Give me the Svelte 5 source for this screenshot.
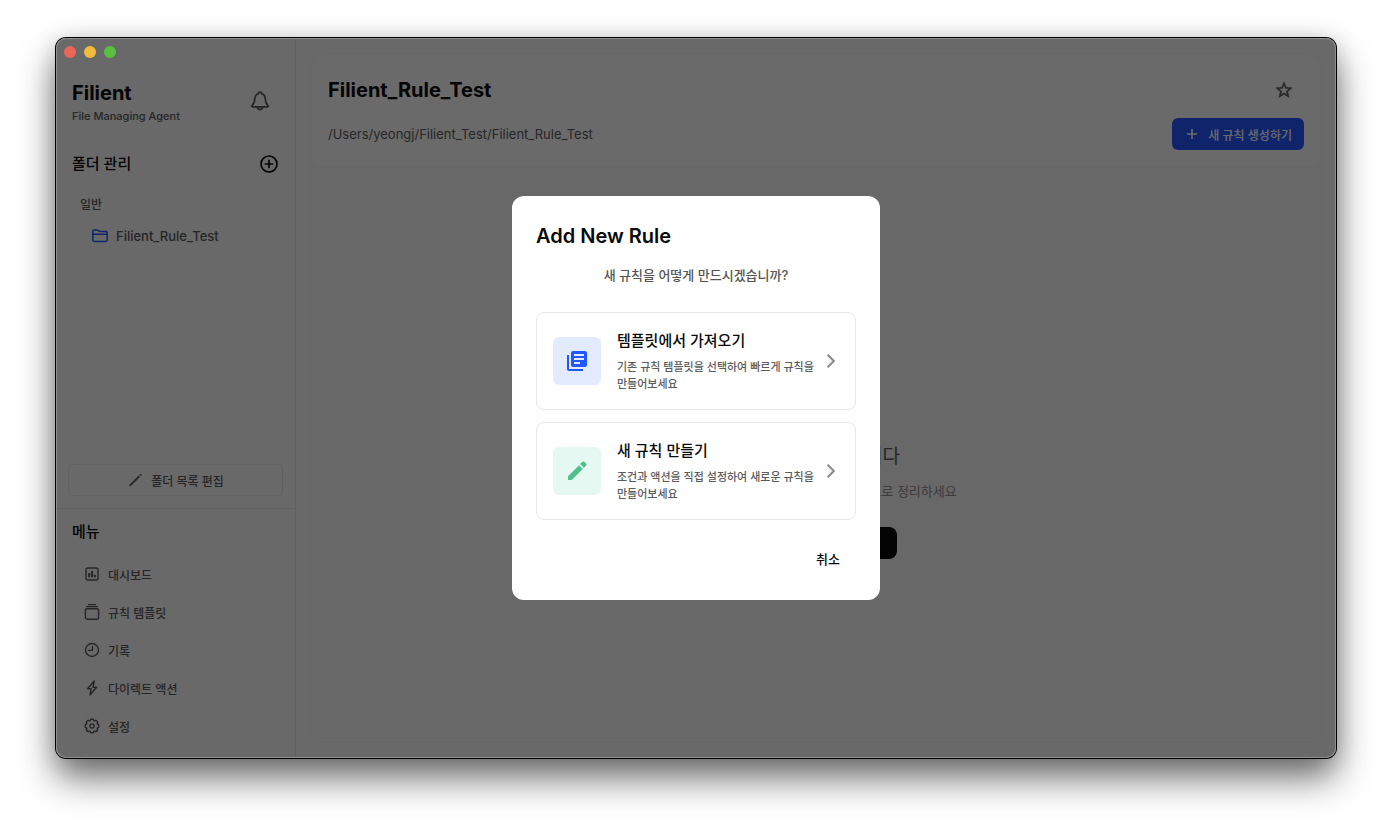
<script>
  const menu = [
    { id: 'dashboard', label: '대시보드' },
    { id: 'template', label: '규칙 템플릿' },
    { id: 'history', label: '기록' },
    { id: 'bolt', label: '다이렉트 액션' },
    { id: 'settings', label: '설정' }
  ];
  const options = [
    { id: 'library', title: '템플릿에서 가져오기', text: '기존 규칙 템플릿을 선택하여 빠르게 규칙을 만들어보세요' },
    { id: 'create', title: '새 규칙 만들기', text: '조건과 액션을 직접 설정하여 새로운 규칙을 만들어보세요' }
  ];
</script>

{#snippet menuIcon(id)}
  <svg class="icon16" viewBox="0 0 16 16" fill="none" stroke="currentColor" stroke-width="1.4" stroke-linecap="round" stroke-linejoin="round" aria-hidden="true">
    {#if id === 'dashboard'}
      <rect x="2" y="2" width="12" height="12" rx="1.8" />
      <path d="M5.2 7v4.300M8 5V11.300M10.800 8.800v2.500" stroke-width="2" stroke-linecap="butt" />
    {:else if id === 'template'}
      <rect x="1.4" y="4.8" width="13.2" height="10.4" rx="2" />
      <path d="M2.600 2.700h10.800M4.400 .7h7.200" stroke-width="1.200" />
    {:else if id === 'history'}
      <circle cx="8" cy="8" r="6.500" />
      <path d="M8.400 4.400V8.400H4.800" />
    {:else if id === 'bolt'}
      <path d="M10.200 1 3.600 8.800h3.600L6 15l6.600-7.800H9z" />
    {:else}
      <path d="M6.700 1.300h2.600l.5 1.300.8.300 1.300-.6 1.800 1.800-.6 1.300.3.800 1.300.5v2.600l-1.300.5-.3.800.6 1.300-1.800 1.800-1.300-.6-.8.300-.5 1.300H6.700l-.5-1.300-.8-.3-1.300.6-1.800-1.800.6-1.300-.3-.8-1.300-.5V6.700l1.300-.5.3-.8-.6-1.300 1.800-1.800 1.300.6.800-.3z" />
      <circle cx="8" cy="8" r="2.100" />
    {/if}
  </svg>
{/snippet}

<div class="desktop">
  <div class="window">
    <div class="lights">
      <button class="red" aria-label="닫기"></button>
      <button class="yellow" aria-label="최소화"></button>
      <button class="green" aria-label="확대"></button>
    </div>

    <aside class="sidebar">
      <header class="brand">
        <div>
          <h1>Filient</h1>
          <p>File Managing Agent</p>
        </div>
        <button class="bell" aria-label="알림">
          <svg width="20" height="20" viewBox="0 0 20 20" fill="none" stroke="currentColor" stroke-width="1.7" stroke-linejoin="round" stroke-linecap="round">
            <path d="M10 1.200c-.9 0-1.500.6-1.600 1.400C6 3.400 4.900 5.200 4.800 7.600c-.1 3.500-.8 4.900-2.600 6.700-.8.8-.4 1.600.6 1.600h14.400c1 0 1.400-.8.6-1.600-1.800-1.800-2.500-3.200-2.600-6.700-.1-2.400-1.200-4.200-3.600-5C11.500 1.800 10.900 1.200 10 1.200z" />
            <path d="M7.400 16.200c.3 1.700 1.300 2.500 2.600 2.500s2.300-.8 2.600-2.500" />
          </svg>
        </button>
      </header>

      <div class="section-head">
        <h2>폴더 관리</h2>
        <button aria-label="폴더 추가">
          <svg width="20" height="20" viewBox="0 0 20 20" fill="none" stroke="currentColor" stroke-width="1.700" stroke-linecap="round">
            <circle cx="10" cy="10" r="8" /><path d="M10 6.400v7.200M6.400 10h7.200" />
          </svg>
        </button>
      </div>

      <nav class="folders" aria-label="폴더">
        <span class="group">일반</span>
        <a class="folder" href="#folder">
          <svg class="icon16" viewBox="0 0 16 16" fill="none" stroke="#2456ff" stroke-width="1.500" stroke-linejoin="round" aria-hidden="true">
            <path d="M.8 12V3.600c0-.9.600-1.500 1.500-1.500h2.900c.5 0 .8.200 1.200.500l.5.400c.3.300.7.400 1.100.400h5.600c1 0 1.600.600 1.600 1.600V12c0 1-.6 1.600-1.600 1.600H2.400C1.400 13.600.8 13 .8 12zM.8 6.200h14.400" />
          </svg>
          <span>Filient_Rule_Test</span>
        </a>
      </nav>

      <button class="edit">
        <svg class="icon16" viewBox="0 0 16 16" aria-hidden="true"><path d="M3.200 13.400 12.400 4.100" stroke="currentColor" stroke-width="2" /><path d="M2.200 14.300 2.500 12.700 3.900 14zM12.500 2.600l.8-.7c.5-.4 1.800.8 1.400 1.300l-.8.900z" fill="currentColor" /></svg>
        <span>폴더 목록 편집</span>
      </button>

      <section class="menu">
        <h2>메뉴</h2>
        <nav aria-label="메뉴">
          {#each menu as item (item.id)}
            <a href={'#' + item.id}>{@render menuIcon(item.id)}<span>{item.label}</span></a>
          {/each}
        </nav>
      </section>
    </aside>

    <main>
      <div class="panel">
        <header class="panel-head">
          <div class="row">
            <h2>Filient_Rule_Test</h2>
            <button class="star" aria-label="즐겨찾기">
              <svg width="20" height="20" viewBox="0 0 24 24" fill="currentColor" stroke="currentColor" stroke-width=".5"><path d="m22 9.240-7.190-.62L12 2 9.190 8.630 2 9.240l5.460 4.730L5.820 21 12 17.270 18.180 21l-1.630-7.030L22 9.240zM12 15.400l-3.760 2.270 1-4.280-3.320-2.880 4.380-.38L12 6.100l1.710 4.040 4.380.38-3.320 2.880 1 4.280L12 15.400z" /></svg>
            </button>
          </div>
          <div class="row">
            <p>/Users/yeongj/Filient_Test/Filient_Rule_Test</p>
            <button class="new">
              <svg class="icon16" viewBox="0 0 16 16" aria-hidden="true"><path d="M8 3v10M3 8h10" stroke="currentColor" stroke-width="1.600" /></svg>
              <span>새 규칙 생성하기</span>
            </button>
          </div>
        </header>
        <div class="empty">
          <h3>아직 규칙이 없습니다</h3>
          <p>새로운 규칙을 만들어서 파일을 자동으로 정리하세요</p>
          <button aria-label="규칙 만들기"></button>
        </div>
      </div>
    </main>

    <div class="backdrop">
      <div class="dialog" role="dialog" aria-modal="true" aria-labelledby="dialog-title">
        <h2 id="dialog-title">Add New Rule</h2>
        <p class="question">새 규칙을 어떻게 만드시겠습니까?</p>
        <div class="options">
          {#each options as option (option.id)}
            <button class="option">
              <span class="tile {option.id}">
                <svg width="24" height="24" viewBox="0 0 24 24" fill="currentColor" aria-hidden="true">
                  {#if option.id === 'library'}
                    <path d="M4 6H2v14c0 1.100.9 2 2 2h14v-2H4V6zm16-4H8c-1.100 0-2 .9-2 2v12c0 1.100.9 2 2 2h12c1.100 0 2-.9 2-2V4c0-1.100-.9-2-2-2zm-1 9H9V9h10v2zm-4 4H9v-2h6v2zm4-8H9V5h10v2z" />
                  {:else}
                    <path d="M3 17.250V21h3.750L17.810 9.940l-3.750-3.750L3 17.250zM20.710 7.040c.8-.8 1-1.700.2-2.500l-1.450-1.450c-.8-.8-1.700-.6-2.500.2l-1.830 1.830 3.750 3.750 1.830-1.830z" />
                  {/if}
                </svg>
              </span>
              <span class="copy"><strong>{option.title}</strong><small>{option.text}</small></span>
              <svg class="icon16 arrow" viewBox="0 0 24 24" fill="currentColor" stroke="currentColor" aria-hidden="true"><path d="M6.230 20.230 8 22l10-10L8 2 6.230 3.770 14.460 12z" /></svg>
            </button>
          {/each}
        </div>
        <button class="cancel">취소</button>
      </div>
    </div>
  </div>
</div>

<style>
  :global(body) { margin: 0; background: #fff; }
  * { box-sizing: border-box; }
  h1, h2, h3, p { margin: 0; }
  button { font: inherit; color: inherit; border: 0; padding: 0; background: none; cursor: pointer; }
  a { color: inherit; text-decoration: none; }
  svg { display: block; flex: none; }
  .icon16 { width: 16px; height: 16px; }

  .desktop {
    min-height: 100vh;
    padding: 38px 56px 74px;
    display: flex;
    font-family: Inter, "Noto Sans CJK KR", sans-serif;
    font-size: 12px;
    font-weight: 500;
    color: #5c5c5c;
    overflow: hidden;
  }
  .window {
    position: relative;
    flex: 1;
    display: flex;
    border-radius: 10px;
    background: #f9f9f9;
    box-shadow: 0 0 0 1px #000, 0 20px 36px rgba(0, 0, 0, .56), 0 2px 24px rgba(0, 0, 0, .16);
  }
  .lights { position: absolute; z-index: 3; top: 8px; left: 8px; display: flex; gap: 8px; }
  .lights button { width: 12px; height: 12px; border-radius: 50%; }
  .red { background: #ec6559; }
  .yellow { background: #f3bb3c; }
  .green { background: #58c13f; }

  .sidebar {
    width: 240px;
    flex: none;
    display: flex;
    flex-direction: column;
    padding-top: 42px;
    border-right: 1px solid #e4e4e4;
  }
  .brand { display: flex; justify-content: space-between; align-items: flex-start; padding: 0 25px 0 16px; }
  .brand h1 { font-size: 20px; line-height: 26px; font-weight: 700; color: #0a0a0a; }
  .brand p { font-size: 11px; line-height: 20px; }
  .bell { padding-top: 11px; }
  .section-head { display: flex; justify-content: space-between; align-items: center; padding: 0 16px; margin-top: 26px; }
  h2 { color: #0a0a0a; }
  .section-head h2, .menu h2 { font-size: 15px; line-height: 24px; font-weight: 500; }
  .section-head button { color: #0a0a0a; }
  .folders { flex: 1; padding: 19px 24px; }
  .group { display: block; line-height: 20px; }
  .folder { display: flex; align-items: center; gap: 8px; margin-top: 11px; padding-left: 12px; font-size: 13px; line-height: 20px; }
  .edit {
    display: flex;
    align-items: center;
    justify-content: center;
    gap: 8px;
    height: 32px;
    margin: 0 12px 12px;
    border: 1px solid #e6e6e6;
    border-radius: 6px;
  }
  .menu { border-top: 1px solid #e4e4e4; padding: 11px 16px 13px; }
  .menu nav { padding-top: 11px; }
  .menu nav a { display: flex; align-items: center; gap: 8px; height: 38px; padding: 0 12px; }

  main { flex: 1; min-width: 0; padding: 16px; display: flex; }
  .panel { flex: 1; display: flex; flex-direction: column; border-radius: 12px; background: #f8f8f8; box-shadow: 0 0 0 1px #f5f5f5; }
  .panel-head { display: flex; flex-direction: column; gap: 8px; padding: 16px; border-radius: 12px; background: #fdfdfd; }
  .row { display: flex; justify-content: space-between; align-items: center; }
  .row h2 { font-size: 20px; line-height: 40px; font-weight: 700; }
  .row p { font-size: 13px; line-height: 32px; font-weight: 400; }
  .star { padding: 10px; }
  .new { display: flex; align-items: center; gap: 8px; height: 32px; padding: 0 12px; border-radius: 6px; background: #2456ff; color: #fff; }
  .empty { flex: 1; display: flex; flex-direction: column; align-items: center; justify-content: center; padding-top: 94px; }
  .empty h3 { font-size: 19px; line-height: 28px; font-weight: 400; color: #5c5c5c; }
  .empty p { font-size: 13px; line-height: 20px; margin: 10px 0 26px; font-weight: 400; color: #8c8c8c; }
  .empty button { width: 162px; height: 32px; border-radius: 8px; background: #0a0a0a; }

  .backdrop {
    position: absolute;
    z-index: 2;
    inset: 0;
    display: flex;
    align-items: center;
    justify-content: center;
    border-radius: 10px;
    background: rgba(0, 0, 0, .58);
    box-shadow: inset 0 0 0 1px #8f8f8f;
  }
  .dialog { width: 368px; padding: 24px; display: flex; flex-direction: column; border-radius: 12px; background: #fff; }
  .dialog h2 { font-size: 20px; line-height: 32px; font-weight: 600; }
  .question { margin: 13px 0 27px; font-size: 13px; line-height: 20px; text-align: center; color: #555; }
  .options { display: flex; flex-direction: column; gap: 12px; }
  .option { display: flex; align-items: center; min-height: 98px; padding: 15px 16px; border: 1px solid #e8e8e8; border-radius: 8px; text-align: left; }
  .tile { flex: none; width: 48px; height: 48px; margin-right: 16px; display: grid; place-items: center; border-radius: 6px; }
  .library { background: #e2ebff; color: #2456ff; }
  .create { background: #e5f8f1; color: #50bf8c; }
  .copy { flex: 1; min-width: 0; display: flex; flex-direction: column; gap: 6px; }
  .copy strong { font-size: 15px; line-height: 24px; font-weight: 500; color: #0a0a0a; }
  .copy small { font-size: 11px; line-height: 17px; color: #5c5c5c; word-break: keep-all; }
  .arrow { color: #8c8c8c; }
  .cancel { align-self: flex-end; margin-top: 24px; padding: 0 16px; font-size: 13px; line-height: 30px; margin-bottom: 2px; color: #0a0a0a; }
</style>
